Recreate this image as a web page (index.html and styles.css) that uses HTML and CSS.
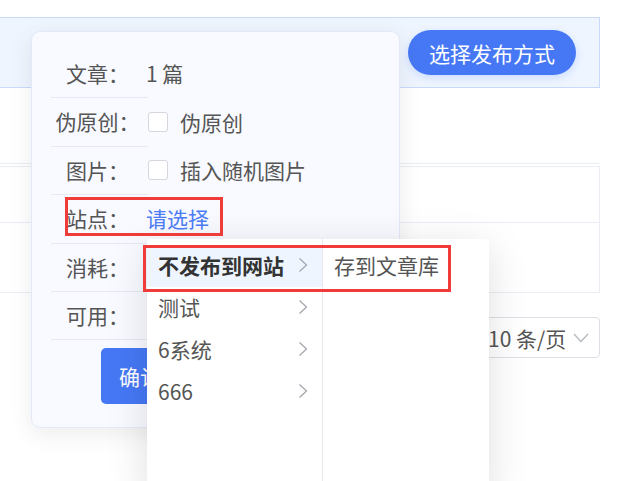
FILE: index.html
```html
<!DOCTYPE html>
<html lang="zh-CN">
<head>
    <meta charset="UTF-8">
    <meta name="viewport" content="width=device-width, initial-scale=1.0">
    <title>发布文章</title>
    <link rel="stylesheet" href="styles.css">
</head>
<body>
    <div class="page">
        <div class="toolbar">
            <button class="btn-pill">选择发布方式</button>
        </div>

        <div class="table-head"></div>
        <div class="table">
            <div class="table-row"></div>
            <div class="table-row"></div>
        </div>

        <div class="pager">
            <div class="page-size">
                <span>10 条/页</span>
                <svg width="16" height="10" viewBox="0 0 16 10"><polyline points="1,1 8,8.5 15,1" fill="none" stroke="#b4b8bf" stroke-width="1.3"/></svg>
            </div>
        </div>

        <!-- publish popover -->
        <div class="popover">
            <div class="form-row">
                <div class="form-label">文章：</div>
                <div class="form-value">1 篇</div>
            </div>
            <div class="form-row">
                <div class="form-label">伪原创：</div>
                <div class="form-value"><span class="checkbox"></span>伪原创</div>
            </div>
            <div class="form-row">
                <div class="form-label">图片：</div>
                <div class="form-value"><span class="checkbox"></span>插入随机图片</div>
            </div>
            <div class="form-row">
                <div class="form-label">站点：</div>
                <div class="form-value"><a class="link">请选择</a></div>
            </div>
            <div class="form-row">
                <div class="form-label">消耗：</div>
                <div class="form-value"></div>
            </div>
            <div class="form-row">
                <div class="form-label">可用：</div>
                <div class="form-value"></div>
            </div>
            <button class="btn-primary">确认</button>
        </div>

        <!-- site cascader -->
        <div class="cascader">
            <ul class="cascader-menu first">
                <li class="active">不发布到网站<svg class="arrow" width="10" height="16" viewBox="0 0 10 16"><polyline points="1.5,1.5 8.5,8 1.5,14.5" fill="none" stroke="#a4a8ae" stroke-width="1.3"/></svg></li>
                <li>测试<svg class="arrow" width="10" height="16" viewBox="0 0 10 16"><polyline points="1.5,1.5 8.5,8 1.5,14.5" fill="none" stroke="#a4a8ae" stroke-width="1.3"/></svg></li>
                <li>6系统<svg class="arrow" width="10" height="16" viewBox="0 0 10 16"><polyline points="1.5,1.5 8.5,8 1.5,14.5" fill="none" stroke="#a4a8ae" stroke-width="1.3"/></svg></li>
                <li>666<svg class="arrow" width="10" height="16" viewBox="0 0 10 16"><polyline points="1.5,1.5 8.5,8 1.5,14.5" fill="none" stroke="#a4a8ae" stroke-width="1.3"/></svg></li>
            </ul>
            <ul class="cascader-menu second">
                <li>存到文章库</li>
            </ul>
        </div>

        <!-- annotation boxes -->
        <div class="mark mark-site"></div>
        <div class="mark mark-option"></div>
    </div>
</body>
</html>
```

FILE: styles.css
```css
body {
    margin: 0;
    padding: 0;
    background-color: #fff;
    font-family: "Noto Sans CJK SC", "Noto Sans", sans-serif;
    color: #555;
}
.page {
    position: relative;
    width: 624px;
    height: 481px;
    overflow: hidden;
}
.toolbar {
    margin: 17px 0 0 -2px;
    width: 602px;
    height: 71px;
    box-sizing: border-box;
    border: 1px solid #c8dafa;
    background-color: #eef5ff;
    display: flex;
    align-items: center;
    justify-content: flex-end;
    padding-right: 23px;
}
.btn-pill {
    height: 45px;
    padding: 0 21px;
    border: none;
    border-radius: 23px;
    background-color: #4678f5;
    color: #fff;
    font-family: inherit;
    font-size: 21px;
    box-shadow: 0 3px 8px rgba(70, 120, 245, 0.2);
}
.table-head {
    margin: 75px 0 0 -2px;
    width: 602px;
    height: 2px;
    border-top: 1px solid #ebedf5;
}
.table {
    margin-left: -2px;
    width: 602px;
    box-sizing: border-box;
    border: 1px solid #ebedf5;
}
.table-row {
    height: 55px;
    border-bottom: 1px solid #ebedf5;
}
.table-row:last-child {
    height: 69px;
    border-bottom: none;
}
.pager {
    display: flex;
    justify-content: flex-end;
    margin-top: 24px;
    padding-right: 24px;
}
.page-size {
    width: 130px;
    height: 41px;
    box-sizing: border-box;
    border: 1px solid #dcdfe6;
    border-radius: 4px;
    display: flex;
    align-items: center;
    justify-content: space-between;
    padding: 0 10px 0 17px;
    font-size: 21px;
    color: #555;
}

/* popover */
.popover {
    position: absolute;
    left: 31px;
    top: 31px;
    width: 369px;
    height: 397px;
    box-sizing: border-box;
    padding: 18px 0 0 19px;
    background-color: #f8faff;
    border: 1px solid #e3e9f8;
    border-radius: 9px;
    box-shadow: 0 6px 24px rgba(0, 0, 0, 0.08);
}
.form-row {
    display: flex;
    height: 48.4px;
    align-items: stretch;
}
.form-label {
    width: 97px;
    box-sizing: border-box;
    padding-right: 4px;
    border-bottom: 1px solid #e4e9f6;
    text-align: center;
    font-size: 21px;
    line-height: 46px;
}
.form-value {
    display: flex;
    align-items: center;
    padding-bottom: 2px;
    margin-left: -2px;
    font-size: 21px;
}
.checkbox {
    width: 20px;
    height: 20px;
    box-sizing: border-box;
    border: 1px solid #d4d7dd;
    border-radius: 3px;
    background-color: #fff;
    margin: 0 12px 0 2px;
}
.link {
    color: #4d7cf6;
}
.btn-primary {
    display: block;
    margin: 8px 0 0 50px;
    width: 110px;
    height: 56px;
    border: none;
    border-radius: 5px;
    background-color: #4678f5;
    color: #fff;
    font-family: inherit;
    font-size: 21px;
    text-align: left;
    padding-left: 18px;
}

/* cascader */
.cascader {
    position: absolute;
    left: 147px;
    top: 239px;
    height: 260px;
    display: flex;
    background-color: #fff;
    border-radius: 4px;
    box-shadow: 0 8px 40px rgba(0, 0, 0, 0.13);
}
.cascader-menu {
    list-style: none;
    margin: 0;
    padding: 6px 0 0;
    font-size: 21px;
}
.cascader-menu.first {
    width: 175px;
    border-right: 1px solid #e6e8ee;
}
.cascader-menu.second {
    width: 166px;
}
.cascader-menu li {
    height: 42px;
    display: flex;
    align-items: center;
    justify-content: space-between;
    padding: 0 14px 2px 11px;
    box-sizing: border-box;
}
.cascader-menu li.active {
    background-color: #eef5ff;
    font-weight: bold;
    color: #333;
}

/* red annotation boxes */
.mark {
    position: absolute;
    box-sizing: border-box;
    border: 3px solid #f03b3b;
}
.mark-site {
    left: 65px;
    top: 197px;
    width: 158px;
    height: 39px;
}
.mark-option {
    left: 143px;
    top: 245px;
    width: 308px;
    height: 47px;
}
```
